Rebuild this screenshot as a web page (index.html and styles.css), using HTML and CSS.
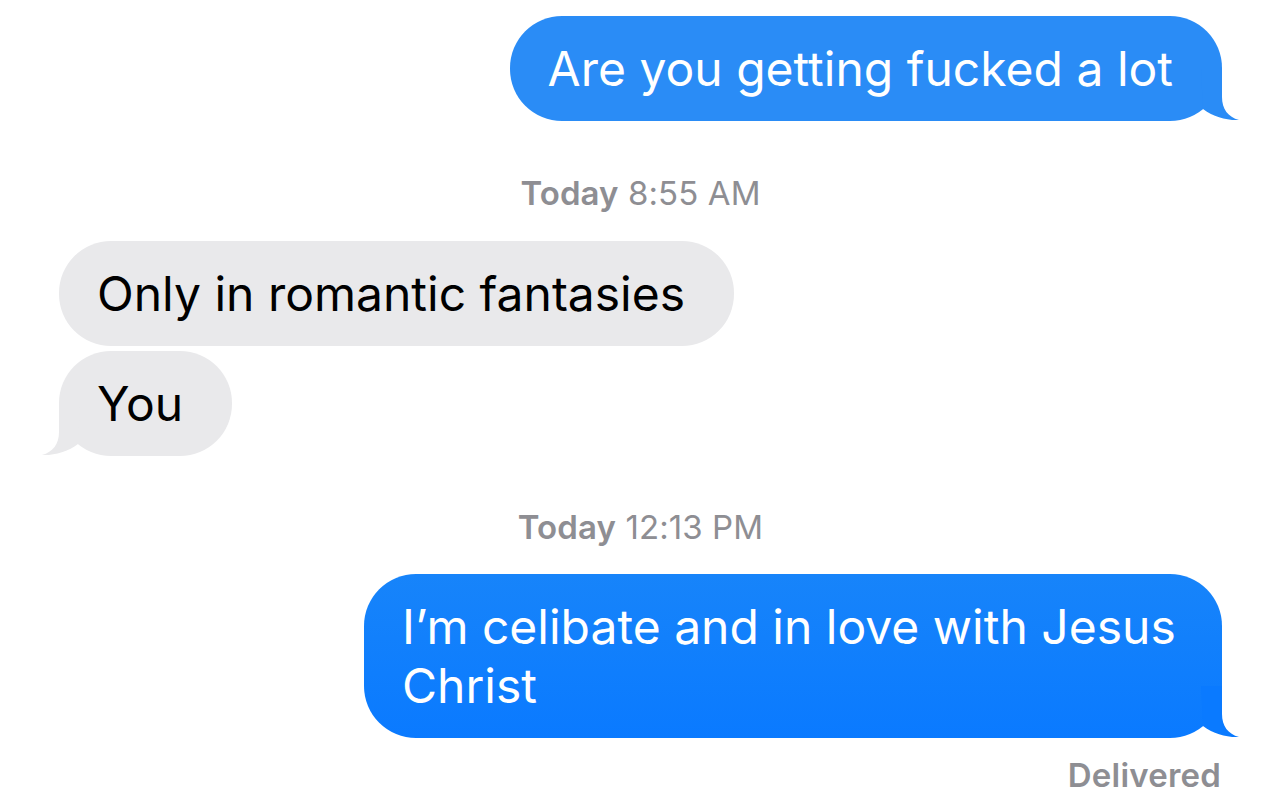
FILE: index.html
```html
<!DOCTYPE html>
<html lang="en">
<head>
<meta charset="utf-8">
<title>Messages</title>
<link rel="stylesheet" href="styles.css">
</head>
<body>
<main class="thread">
  <div class="bubble sent sent-top tail">
    Are you getting fucked a lot
    <svg class="tail-svg" viewBox="-40 -52 58 52" width="58" height="52" aria-hidden="true"><path d="M -21 -52 L 0 -52 L 0 -24 C 0 -12 6 -4 17 -1 C 4 -0.5 -8 -4 -19 -12 L -21 -52 Z"/></svg>
  </div>

  <p class="stamp"><b>Today</b> 8:55 AM</p>

  <div class="bubble received">Only in romantic fantasies</div>
  <div class="bubble received tail gap-small">
    You
    <svg class="tail-svg" viewBox="-40 -52 58 52" width="58" height="52" aria-hidden="true"><path d="M -21 -52 L 0 -52 L 0 -24 C 0 -12 6 -4 17 -1 C 4 -0.5 -8 -4 -19 -12 L -21 -52 Z"/></svg>
  </div>

  <p class="stamp stamp-second"><b>Today</b> 12:13 PM</p>

  <div class="bubble sent sent-bottom tail">
    I’m celibate and in love with Jesus Christ
    <svg class="tail-svg" viewBox="-40 -52 58 52" width="58" height="52" aria-hidden="true"><path d="M -21 -52 L 0 -52 L 0 -24 C 0 -12 6 -4 17 -1 C 4 -0.5 -8 -4 -19 -12 L -21 -52 Z"/></svg>
  </div>

  <p class="delivered">Delivered</p>
</main>
</body>
</html>
```

FILE: styles.css
```css
* { box-sizing: border-box; }

html, body {
  margin: 0;
  padding: 0;
  background: #ffffff;
}

body {
  font-family: Inter, "Noto Sans", "Liberation Sans", sans-serif;
  -webkit-font-smoothing: antialiased;
}

.thread {
  display: flex;
  flex-direction: column;
  padding: 16px 60px 0 59px;
}

.bubble {
  position: relative;
  max-width: 858px;
  padding: 23px 49px 23px 38px;
  border-radius: 52px;
  font-size: 48px;
  line-height: 59px;
  letter-spacing: 0;
}

.sent {
  align-self: flex-end;
  color: #ffffff;
}

.sent-top {
  background: #2a8cf6;
  fill: #2a8cf6;
}

.sent-bottom {
  padding-right: 38px;
  background: linear-gradient(#1784fa, #0a7aff);
  fill: #0a7aff;
}

.received {
  align-self: flex-start;
  background: #e9e9eb;
  fill: #e9e9eb;
  color: #000000;
  margin-top: 29px;
}

.gap-small {
  margin-top: 5px;
}

.tail-svg {
  position: absolute;
  right: -18px;
  bottom: 0;
  overflow: visible;
}

.received .tail-svg {
  right: auto;
  left: -18px;
  transform: scaleX(-1);
}

.stamp {
  margin: 53px 0 0;
  text-align: center;
  font-size: 33px;
  line-height: 38px;
  letter-spacing: 0.1px;
  color: #8e8e93;
  font-weight: 400;
}

.stamp b {
  font-weight: 600;
}

.stamp-second {
  margin-top: 52px;
  margin-bottom: 28px;
}

.delivered {
  align-self: flex-end;
  margin: 18px 1px 0 0;
  font-size: 33px;
  line-height: 38px;
  letter-spacing: 0.2px;
  font-weight: 600;
  color: #8e8e93;
}
```
